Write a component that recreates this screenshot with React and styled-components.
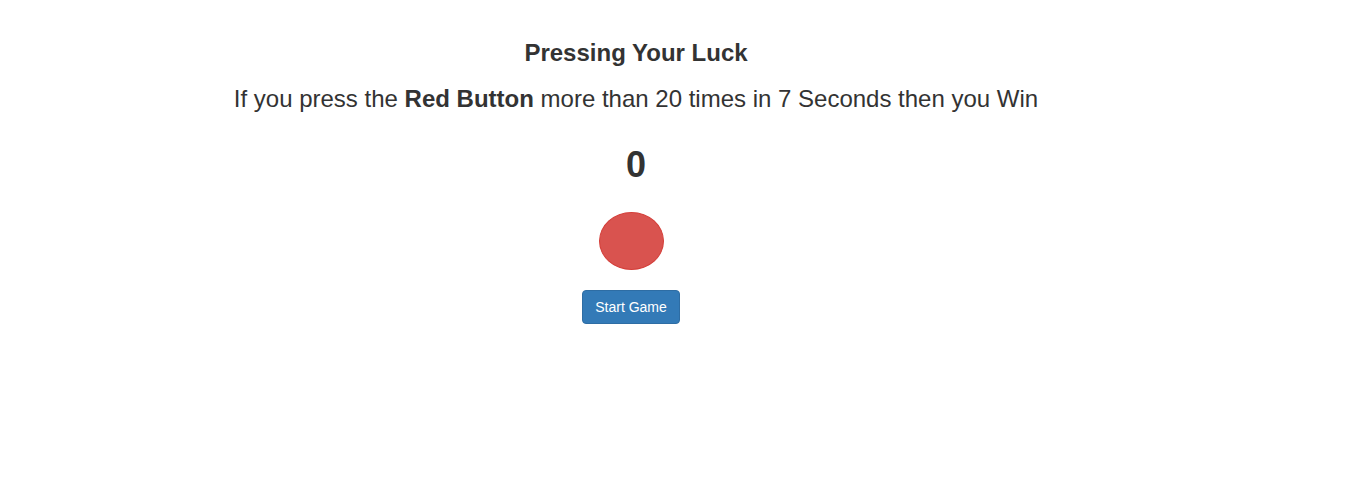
import React from "react";
import styled, { createGlobalStyle } from "styled-components";

const Global = createGlobalStyle`
  html, body { margin: 0; padding: 0; background: #fff; }
  body {
    font-family: "Liberation Sans", Arial, Helvetica, sans-serif;
    color: #333;
    font-size: 14px;
    line-height: 1.42857143;
  }
`;

const Page = styled.div`
  width: 1272px;
  display: flex;
  flex-direction: column;
  align-items: center;
  padding-top: 20px;
`;

const Title = styled.h3`
  margin: 20px 0 0;
  font-size: 24px;
  font-weight: 700;
  line-height: 1.1;
`;

const Rules = styled.p`
  margin: 16px 0 0;
  font-size: 24px;
  line-height: 1.42857143;
`;

const Counter = styled.h1`
  margin: 28px 0 10px;
  font-size: 36px;
  font-weight: 700;
  line-height: 1.1;
`;

const Controls = styled.div`
  display: flex;
  flex-direction: column;
  align-items: center;
  gap: 20px;
  margin-top: 18px;
  margin-right: 10px;
`;

const RedButton = styled.button`
  width: 65px;
  height: 58px;
  border-radius: 50%;
  background: #d9534f;
  border: 1px solid #d43f3a;
  padding: 0;
  cursor: pointer;
`;

const StartButton = styled.button`
  font-family: "Liberation Sans", Arial, Helvetica, sans-serif;
  font-size: 14px;
  line-height: 1.42857143;
  color: #fff;
  background: #337ab7;
  border: 1px solid #2e6da4;
  border-radius: 4px;
  padding: 6px 12px;
  height: 34px;
  cursor: pointer;
`;

export default function App() {
  return (
    <>
      <Global />
      <Page>
        <Title>Pressing Your Luck</Title>
        <Rules>
          If you press the <b>Red Button</b> more than 20 times in 7 Seconds then you Win
        </Rules>
        <Counter>0</Counter>
        <Controls>
          <RedButton aria-label="Red Button" />
          <StartButton>Start Game</StartButton>
        </Controls>
      </Page>
    </>
  );
}
